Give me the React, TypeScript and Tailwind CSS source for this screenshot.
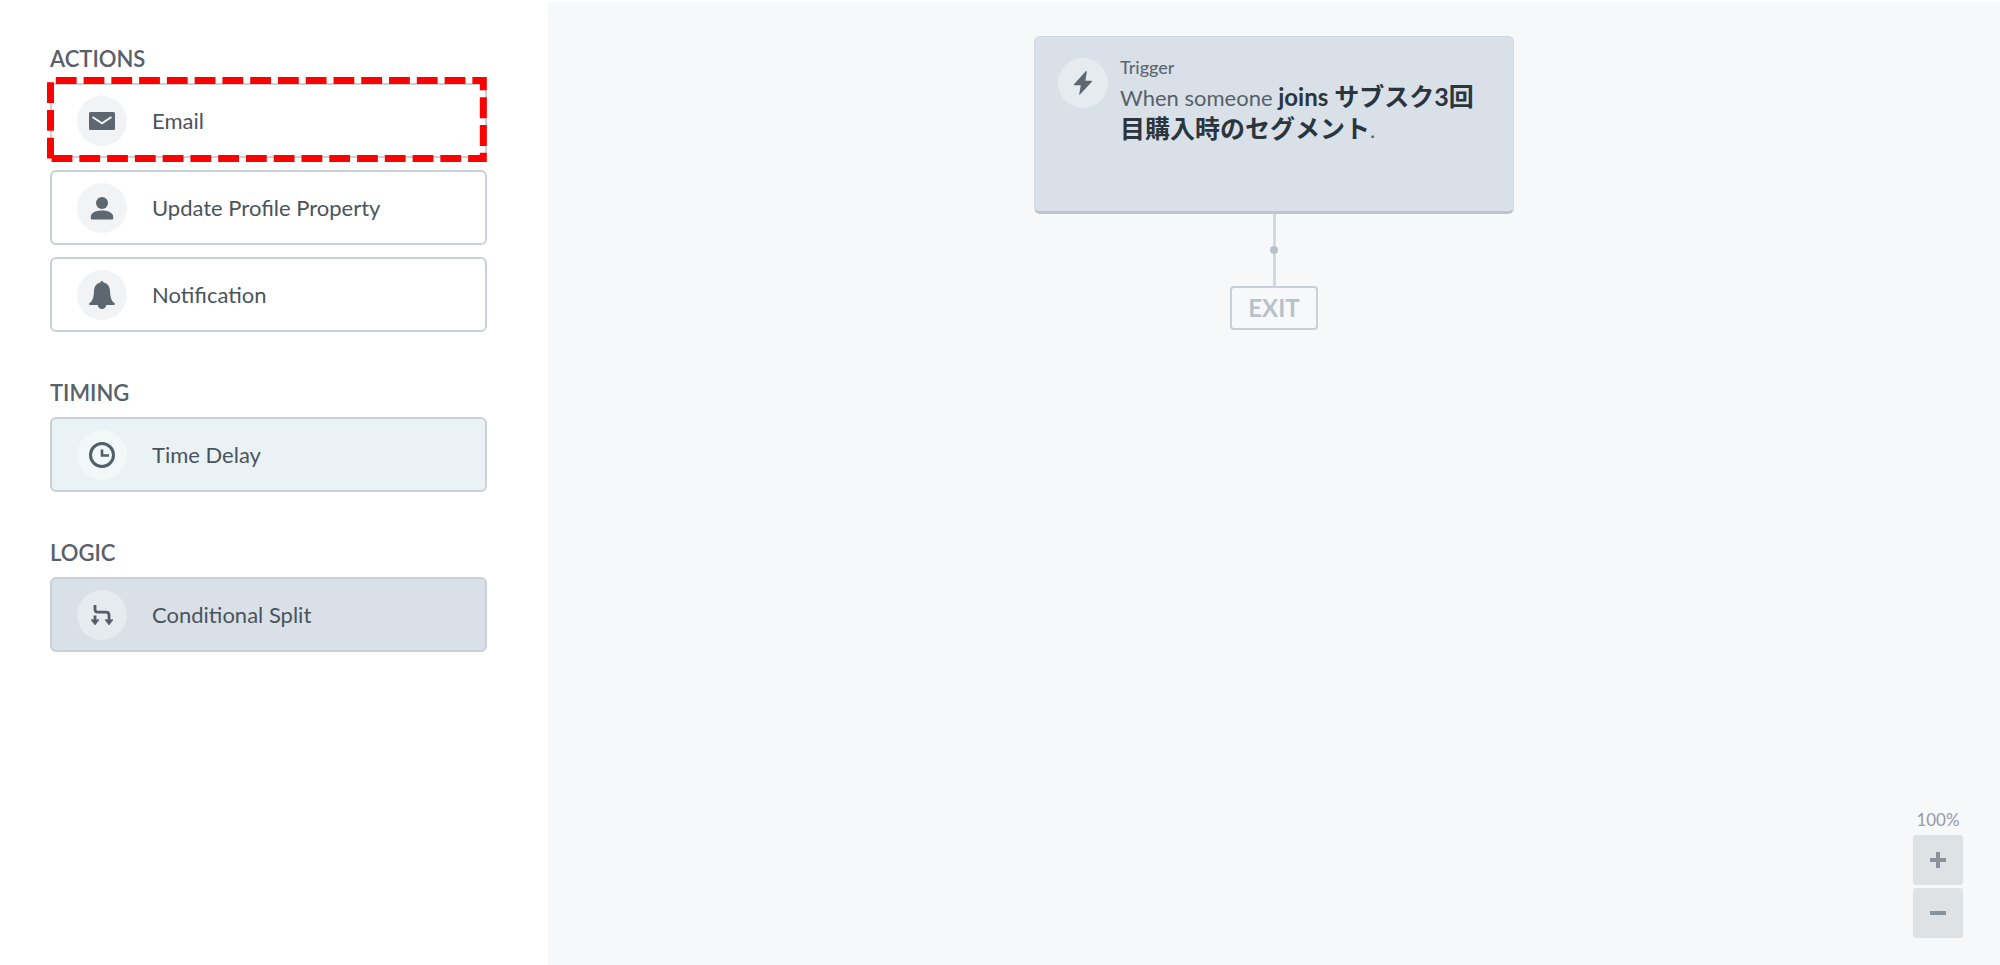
import { useState } from "react";
import type { ReactNode } from "react";

type BlockProps = {
  label: string;
  icon: ReactNode;
  tone?: "plain" | "timing" | "logic";
  highlighted?: boolean;
};

const tones = {
  plain: { card: "bg-white", badge: "bg-[#f1f3f5]" },
  timing: { card: "bg-[#eaf2f5]", badge: "bg-[#f2f7f8]" },
  logic: { card: "bg-[#d9e0e8]", badge: "bg-[#e6ebef]" },
};

function EmailIcon() {
  return (
    <svg width="26" height="18" viewBox="0 0 26 18" aria-hidden="true">
      <rect width="26" height="18" rx="1.5" fill="#5c6770" />
      <path d="M3.5 5 13 11.3 22.5 5" fill="none" stroke="#f1f3f5" strokeWidth="2" />
    </svg>
  );
}

function ProfileIcon() {
  return (
    <svg width="24" height="24" viewBox="0 0 24 24" fill="#5c6770" aria-hidden="true">
      <circle cx="12" cy="7" r="6" />
      <path d="M.8 22.6v-1.8C.8 16.6 6.5 14.6 12 14.6s11.2 2 11.2 6.200v1.800c0 .5-.3.8-.8.8H1.600c-.5 0-.8-.3-.8-.8z" />
    </svg>
  );
}

function BellIcon() {
  return (
    <svg width="26" height="28" viewBox="0 0 26 28" fill="#5c6770" aria-hidden="true">
      <path d="M13 0c.8 0 1.300.6 1.500 1.500C18.800 2.400 20.700 5.600 21 10c.3 5 .8 8.200 2.600 10.400l2.200 2.200c.4.500.1 1.300-.6 1.300H.8c-.7 0-1-.8-.6-1.300l2.200-2.200C4.200 18.200 4.700 15 5 10c.3-4.400 2.200-7.600 6.500-8.500C11.700.6 12.200 0 13 0z" />
      <path d="M8.800 24h8.400c0 2.300-1.900 4-4.200 4s-4.200-1.700-4.200-4z" />
    </svg>
  );
}

function ClockIcon() {
  return (
    <svg width="26" height="26" viewBox="0 0 26 26" fill="none" stroke="#535e67" aria-hidden="true">
      <circle cx="13" cy="13" r="11.500" strokeWidth="3" />
      <path d="M13 7.500v6h7" strokeWidth="2.600" />
    </svg>
  );
}

function SplitIcon() {
  return (
    <svg width="22" height="20" viewBox="0 0 22 20" aria-hidden="true">
      <path d="M4 0v4.500c0 1.800 1 2.700 2.700 2.700H15c2 0 3 1 3 3V16" fill="none" stroke="#535e67" strokeWidth="2.800" />
      <path d="M4 10.500V16" fill="none" stroke="#535e67" strokeWidth="2.800" />
      <path d="M0 14.800h8L4 20zM14 14.800h8L18 20z" fill="#535e67" stroke="#535e67" strokeWidth=".6" strokeLinejoin="round" />
    </svg>
  );
}

function BoltIcon() {
  return (
    <svg width="20" height="24" viewBox="0 0 20 24" fill="#5c6770" aria-hidden="true">
      <path d="M12.800.3 1 13.200c-.4.500-.1 1 .5 1h6.300l-1.600 9c-.1.700.4.900.8.400L18.900 10.800c.4-.5.100-1-.5-1h-6l1.400-9c.1-.7-.6-1-1-.5z" />
    </svg>
  );
}

function Block({ label, icon, tone = "plain", highlighted = false }: BlockProps) {
  return (
    <div className="relative">
      <button
        type="button"
        className={`flex h-[75px] w-full items-center gap-[25px] rounded-md border-2 border-[#c9d0d8] px-[25px] text-left text-[22px] text-[#4a545c] ${tones[tone].card}`}
      >
        <span
          className={`flex size-[50px] shrink-0 items-center justify-center rounded-full ${tones[tone].badge}`}
        >
          {icon}
        </span>
        {label}
      </button>

      {highlighted && (
        <svg
          className="pointer-events-none absolute -top-[6px] -left-[3px]"
          width="440"
          height="86"
          viewBox="0 0 440 86"
          aria-hidden="true"
        >
          <path
            d="M3.500 81.500V3.500H436.300V81.500H4"
            fill="none"
            stroke="#ff0000"
            strokeWidth="7"
            strokeDasharray="20.800 6.970"
          />
        </svg>
      )}
    </div>
  );
}

function Section({ title, children }: { title: string; children: ReactNode }) {
  return (
    <section>
      <h2 className="mb-[10px] text-[22px] leading-7 font-semibold text-[#56616a]">{title}</h2>
      <div className="flex flex-col gap-3">{children}</div>
    </section>
  );
}

export default function App() {
  const [zoom, setZoom] = useState(100);

  return (
    <div className="flex min-h-screen bg-white font-['Lato','Noto_Sans_CJK_JP',sans-serif]">
      <aside className="flex w-[548px] shrink-0 flex-col gap-[47px] pt-[45px] pr-[61px] pb-10 pl-[50px]">
        <Section title="ACTIONS">
          <Block label="Email" icon={<EmailIcon />} highlighted />
          <Block label="Update Profile Property" icon={<ProfileIcon />} />
          <Block label="Notification" icon={<BellIcon />} />
        </Section>
        <Section title="TIMING">
          <Block label="Time Delay" icon={<ClockIcon />} tone="timing" />
        </Section>
        <Section title="LOGIC">
          <Block label="Conditional Split" icon={<SplitIcon />} tone="logic" />
        </Section>
      </aside>

      <main className="relative mt-[2px] flex flex-1 flex-col items-center bg-[#f6f8fa] pt-[34px]">
        <article className="flex h-[178px] w-[480px] gap-3 rounded-md border border-b-3 border-[#d0d8df] border-b-[#bcc5ce] bg-[#d9e0e8] px-[23px] pt-[21px]">
          <span className="flex size-[50px] shrink-0 items-center justify-center rounded-full bg-[#e6ebef]">
            <BoltIcon />
          </span>
          <div className="w-[360px]">
            <h3 className="mb-1.5 text-[18px] leading-[18px] font-medium text-[#5c6770]">Trigger</h3>
            <p className="text-[22px] leading-8 text-[#56616a]">
              When someone <strong className="text-2xl leading-none font-bold text-[#2b353d]">joins</strong>
              <strong className="text-[25px] leading-none font-bold text-[#2b353d]">
                {" "}
                サブスク3回目購入時のセグメント
              </strong>
              .
            </p>
          </div>
        </article>

        <div className="flex h-[72px] w-[3px] items-center justify-center bg-[#d2d9df]">
          <span className="size-2 shrink-0 rounded-full bg-[#b8c1ca]" />
        </div>

        <div className="flex h-11 w-[88px] items-center justify-center rounded border-2 border-[#c9d0d8] text-2xl font-bold text-[#b8c1ca]">
          EXIT
        </div>

        <div className="absolute right-[37px] bottom-[27px] flex w-[50px] flex-col gap-[3px]">
          <output className="text-center text-[17px] leading-6 text-[#949ca4]">{zoom}%</output>
          <button
            type="button"
            aria-label="Zoom in"
            onClick={() => setZoom(Math.min(zoom + 10, 200))}
            className="flex size-[50px] items-center justify-center rounded-[3px] bg-[#dee2e5]"
          >
            <svg width="16" height="16" viewBox="0 0 16 16" stroke="#8a939c" strokeWidth="4" aria-hidden="true">
              <path d="M0 8h16M8 0v16" />
            </svg>
          </button>
          <button
            type="button"
            aria-label="Zoom out"
            onClick={() => setZoom(Math.max(zoom - 10, 10))}
            className="flex size-[50px] items-center justify-center rounded-[3px] bg-[#dee2e5]"
          >
            <svg width="16" height="16" viewBox="0 0 16 16" stroke="#8a939c" strokeWidth="4" aria-hidden="true">
              <path d="M0 8h16" />
            </svg>
          </button>
        </div>
      </main>
    </div>
  );
}
